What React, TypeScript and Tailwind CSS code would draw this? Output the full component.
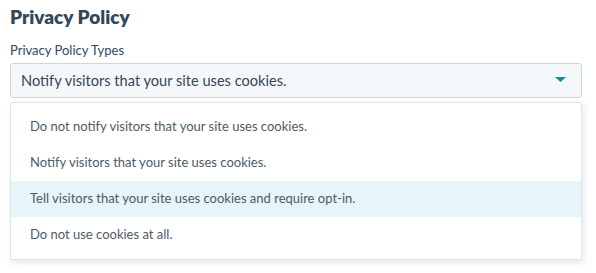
import { useState } from "react";

const options = [
  "Do not notify visitors that your site uses cookies.",
  "Notify visitors that your site uses cookies.",
  "Tell visitors that your site uses cookies and require opt-in.",
  "Do not use cookies at all.",
];

export default function App() {
  const [hovered] = useState(2);

  return (
    <div
      className="w-[596px] h-[273px] bg-white px-[10px] pt-[4px] text-[#33475b]"
      style={{ fontFamily: "Lato, 'Noto Sans', sans-serif" }}
    >
      <h1 className="text-[19px] leading-[25px] font-extrabold">Privacy Policy</h1>
      <label className="block mt-[12px] text-[13px] leading-[18px]">Privacy Policy Types</label>
      <button className="mt-[4px] w-[572px] h-[35px] flex items-center justify-between pl-[10px] pr-[15px] rounded-[3px] border border-[#cbd6e2] bg-[#f5f8fa] text-[14.6px] text-left">
        <span>Notify visitors that your site uses cookies.</span>
        <svg width="11" height="5" viewBox="0 0 11 5" className="mb-[2px]">
          <path d="M0 0 H11 L5.5 5 Z" fill="#0091ae" />
        </svg>
      </button>
      <ul className="mt-[4px] w-[572px] py-[6px] border border-[#dfe3eb] bg-white rounded-[2px] shadow-[2px_3px_6px_rgba(45,62,80,0.12)]">
        {options.map((o, i) => (
          <li
            key={o}
            className={`h-[36px] flex items-center pl-[19px] text-[13px] text-[#4f5b66] ${
              i === hovered ? "bg-[#e5f5f8]" : ""
            }`}
          >
            {o}
          </li>
        ))}
      </ul>
    </div>
  );
}
